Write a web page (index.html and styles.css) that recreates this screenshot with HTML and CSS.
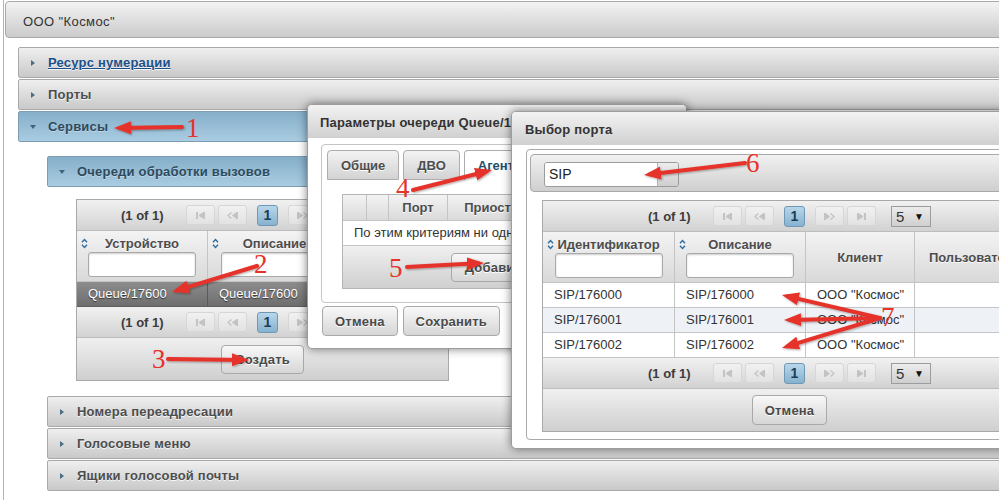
FILE: index.html
```html
<!DOCTYPE html>
<html lang="ru">
<head>
  <meta charset="UTF-8">
  <meta name="viewport" content="width=device-width, initial-scale=1.0">
  <title>Очереди обработки вызовов</title>
  <link rel="stylesheet" href="styles.css">
</head>
<body>
<div class="page">

  <div class="panel">
    <div class="panel-title">ООО "Космос"</div>

    <div class="acc">
      <div class="acc-head"><span class="ico-r"></span><a class="acc-link" href="#">Ресурс нумерации</a></div>
      <div class="acc-head"><span class="ico-r"></span>Порты</div>
      <div class="acc-head active"><span class="ico-d"></span>Сервисы</div>
      <div class="acc-body">
        <div class="acc-head active"><span class="ico-d"></span>Очереди обработки вызовов</div>
        <div class="acc-body queue-body">
          <div class="dt dt-queues">
            <div class="pager">
              <span class="pg-info">(1 of 1)</span>
              <span class="pg"><svg width="9" height="7"><path d="M0 0h1.6v7H0z M8.5 0v7L3 3.5z"/></svg></span>
              <span class="pg"><svg width="11" height="7"><path d="M4.5 0.5L1 3.5L4.5 6.5" fill="none" stroke-width="1.3"/><path d="M10.5 0v7L5.5 3.5z"/></svg></span>
              <span class="pg-cur">1</span>
              <span class="pg"><svg width="11" height="7"><path d="M0.5 0v7L5.5 3.5z"/><path d="M6.5 0.5L10 3.5L6.5 6.5" fill="none" stroke-width="1.3"/></svg></span>
              <span class="pg"><svg width="9" height="7"><path d="M0.5 0v7L6 3.5z M7.4 0H9v7H7.4z"/></svg></span>
              <span class="pg-rows">5<i>▼</i></span>
            </div>
            <div class="dt-row dt-head">
              <div class="th"><svg class="sort" width="7" height="11"><path d="M1 4.2L3.5 1.5L6 4.2 M1 6.8L3.5 9.5L6 6.8"/></svg><span class="th-label">Устройство</span><input class="filter" type="text"></div>
              <div class="th"><svg class="sort" width="7" height="11"><path d="M1 4.2L3.5 1.5L6 4.2 M1 6.8L3.5 9.5L6 6.8"/></svg><span class="th-label">Описание</span><input class="filter" type="text"></div>
              <div class="th"></div>
            </div>
            <div class="dt-row selected">
              <div class="td">Queue/17600</div>
              <div class="td">Queue/17600</div>
              <div class="td"></div>
            </div>
            <div class="pager">
              <span class="pg-info">(1 of 1)</span>
              <span class="pg"><svg width="9" height="7"><path d="M0 0h1.6v7H0z M8.5 0v7L3 3.5z"/></svg></span>
              <span class="pg"><svg width="11" height="7"><path d="M4.5 0.5L1 3.5L4.5 6.5" fill="none" stroke-width="1.3"/><path d="M10.5 0v7L5.5 3.5z"/></svg></span>
              <span class="pg-cur">1</span>
              <span class="pg"><svg width="11" height="7"><path d="M0.5 0v7L5.5 3.5z"/><path d="M6.5 0.5L10 3.5L6.5 6.5" fill="none" stroke-width="1.3"/></svg></span>
              <span class="pg"><svg width="9" height="7"><path d="M0.5 0v7L6 3.5z M7.4 0H9v7H7.4z"/></svg></span>
              <span class="pg-rows">5<i>▼</i></span>
            </div>
            <div class="dt-foot"><button class="btn" type="button">Создать</button></div>
          </div>
        </div>
        <div class="acc-head"><span class="ico-r"></span>Номера переадресации</div>
        <div class="acc-head"><span class="ico-r"></span>Голосовые меню</div>
        <div class="acc-head"><span class="ico-r"></span>Ящики голосовой почты</div>
      </div>
    </div>
  </div>

  <!-- диалог параметров очереди -->
  <div class="dlg dlg-queue">
    <div class="dlg-title">Параметры очереди Queue/17600</div>
    <div class="tabview">
      <div class="tabs">
        <span class="tab">Общие</span>
        <span class="tab">ДВО</span>
        <span class="tab tab-active">Агенты</span>
      </div>
      <div class="tab-panel">
        <div class="mini">
          <div class="mini-head">
            <div class="mc"></div>
            <div class="mc"></div>
            <div class="mc">Порт</div>
            <div class="mc">Приостановлен</div>
            <div class="mc"></div>
          </div>
          <div class="mini-empty">По этим критериям ни одной записи не найдено</div>
          <div class="dt-foot"><button class="btn" type="button">Добавить</button></div>
        </div>
      </div>
    </div>
    <div class="dlg-buttons">
      <button class="btn btn-big" type="button">Отмена</button>
      <button class="btn btn-big" type="button">Сохранить</button>
    </div>
  </div>

  <!-- диалог выбора порта -->
  <div class="dlg dlg-port">
    <div class="dlg-title">Выбор порта</div>
    <div class="port-panel">
      <div class="toolbar">
        <div class="select">
          <span class="select-value">SIP</span>
          <span class="select-trigger"></span>
        </div>
      </div>
      <div class="dt dt-ports">
        <div class="pager">
          <span class="pg-info">(1 of 1)</span>
          <span class="pg"><svg width="9" height="7"><path d="M0 0h1.6v7H0z M8.5 0v7L3 3.5z"/></svg></span>
          <span class="pg"><svg width="11" height="7"><path d="M4.5 0.5L1 3.5L4.5 6.5" fill="none" stroke-width="1.3"/><path d="M10.5 0v7L5.5 3.5z"/></svg></span>
          <span class="pg-cur">1</span>
          <span class="pg"><svg width="11" height="7"><path d="M0.5 0v7L5.5 3.5z"/><path d="M6.5 0.5L10 3.5L6.5 6.5" fill="none" stroke-width="1.3"/></svg></span>
          <span class="pg"><svg width="9" height="7"><path d="M0.5 0v7L6 3.5z M7.4 0H9v7H7.4z"/></svg></span>
          <span class="pg-rows">5<i>▼</i></span>
        </div>
        <div class="dt-row dt-head">
          <div class="th"><svg class="sort" width="7" height="11"><path d="M1 4.2L3.5 1.5L6 4.2 M1 6.8L3.5 9.5L6 6.8"/></svg><span class="th-label">Идентификатор</span><input class="filter" type="text"></div>
          <div class="th"><svg class="sort" width="7" height="11"><path d="M1 4.2L3.5 1.5L6 4.2 M1 6.8L3.5 9.5L6 6.8"/></svg><span class="th-label">Описание</span><input class="filter" type="text"></div>
          <div class="th th-mid">Клиент</div>
          <div class="th th-mid">Пользователь</div>
        </div>
        <div class="dt-row">
          <div class="td">SIP/176000</div>
          <div class="td">SIP/176000</div>
          <div class="td">ООО "Космос"</div>
          <div class="td"></div>
        </div>
        <div class="dt-row odd">
          <div class="td">SIP/176001</div>
          <div class="td">SIP/176001</div>
          <div class="td">ООО "Космос"</div>
          <div class="td"></div>
        </div>
        <div class="dt-row">
          <div class="td">SIP/176002</div>
          <div class="td">SIP/176002</div>
          <div class="td">ООО "Космос"</div>
          <div class="td"></div>
        </div>
        <div class="pager">
          <span class="pg-info">(1 of 1)</span>
          <span class="pg"><svg width="9" height="7"><path d="M0 0h1.6v7H0z M8.5 0v7L3 3.5z"/></svg></span>
          <span class="pg"><svg width="11" height="7"><path d="M4.5 0.5L1 3.5L4.5 6.5" fill="none" stroke-width="1.3"/><path d="M10.5 0v7L5.5 3.5z"/></svg></span>
          <span class="pg-cur">1</span>
          <span class="pg"><svg width="11" height="7"><path d="M0.5 0v7L5.5 3.5z"/><path d="M6.5 0.5L10 3.5L6.5 6.5" fill="none" stroke-width="1.3"/></svg></span>
          <span class="pg"><svg width="9" height="7"><path d="M0.5 0v7L6 3.5z M7.4 0H9v7H7.4z"/></svg></span>
          <span class="pg-rows">5<i>▼</i></span>
        </div>
        <div class="dt-foot"><button class="btn btn-big" type="button">Отмена</button></div>
      </div>
    </div>
  </div>

  <!-- пометки поверх скриншота -->
  <svg class="marks" width="999" height="500">
    <defs>
      <marker id="head" markerWidth="18" markerHeight="14" refX="11" refY="6.5" orient="auto" markerUnits="userSpaceOnUse">
        <path d="M0 0L17 6.5L0 13z"/>
      </marker>
      <filter id="shade"><feDropShadow dx="1" dy="1" stdDeviation="0.8" flood-opacity="0.35"/></filter>
    </defs>
    <g class="arrows" filter="url(#shade)">
      <line x1="182" y1="127" x2="120" y2="128"/>
      <line x1="257" y1="266" x2="177.7" y2="290.2"/>
      <line x1="168" y1="359" x2="243" y2="360"/>
      <line x1="413" y1="190" x2="486.2" y2="171.5"/>
      <line x1="407" y1="267" x2="478" y2="263.3"/>
      <line x1="745" y1="163" x2="650" y2="174.3"/>
      <line x1="880" y1="318" x2="787.8" y2="296.4"/>
      <line x1="880" y1="318" x2="790" y2="319.9"/>
      <line x1="880" y1="318" x2="787.7" y2="346.2"/>
    </g>
    <g class="nums">
      <text x="186" y="137">1</text>
      <text x="254" y="273">2</text>
      <text x="152" y="368">3</text>
      <text x="396" y="197">4</text>
      <text x="389" y="277">5</text>
      <text x="746" y="172">6</text>
      <text x="881" y="326">7</text>
    </g>
  </svg>

</div>
</body>
</html>
```

FILE: styles.css
```css
* {
  box-sizing: border-box;
}

body {
  margin: 0;
  font-family: "Liberation Sans", Arial, sans-serif;
  font-size: 13px;
  color: #333;
  background: #fff;
}

.page {
  position: relative;
  width: 999px;
  height: 500px;
  overflow: hidden;
}

/* основная панель */
.panel {
  margin-left: 3px;
  padding-top: 1px;
  width: 1200px;
  height: 500px;
  border-left: 1px solid #b4b4b4;
}

.panel-title {
  margin-left: 1px;
  height: 37px;
  padding-left: 17px;
  line-height: 39px;
  border: 1px solid #a9a9a9;
  border-radius: 4px;
  background: linear-gradient(#f3f3f3, #cbcbcb);
  letter-spacing: 0.4px;
  color: #333;
}

.acc {
  margin: 9px 0 0 14px;
}

.acc-head {
  display: flex;
  align-items: center;
  height: 31px;
  margin-bottom: 1px;
  padding-left: 11px;
  border: 1px solid #a9a9a9;
  border-radius: 2px;
  background: linear-gradient(#efefef, #c9c9c9);
  font-weight: bold;
  letter-spacing: 0.2px;
  color: #4d4d4d;
  text-shadow: 0 1px 0 rgba(255, 255, 255, 0.8);
}

.acc-head.active {
  border-color: #7d9db3;
  background: linear-gradient(#86afca, #a9cce1);
  color: #2c4a5e;
  text-shadow: 0 1px 0 rgba(255, 255, 255, 0.35);
}

.acc-link {
  color: #1b4f8a;
}

.ico-r,
.ico-d {
  width: 6px;
  margin-right: 12px;
  display: flex;
  justify-content: center;
}

.ico-r::before {
  content: "";
  border-left: 4px solid #4a6e87;
  border-top: 3.5px solid transparent;
  border-bottom: 3.5px solid transparent;
}

.ico-d::before {
  content: "";
  border-top: 4px solid #3e6580;
  border-left: 3.5px solid transparent;
  border-right: 3.5px solid transparent;
}

.acc-body {
  padding: 13px 0 0 29px;
}

.acc-body.queue-body {
  padding: 11px 0 15px 29px;
}

/* таблицы */
.dt {
  border: 1px solid #a9a9a9;
  background: #fff;
}

.dt-queues {
  width: 373px;
}

.dt-ports {
  width: 495px;
  margin: 8px 0 0 12px;
}

.pager {
  display: flex;
  align-items: center;
  justify-content: center;
  height: 31px;
  border-bottom: 1px solid #bdbdbd;
  background: linear-gradient(#f1f1f1, #d2d2d2);
}

.pg-info {
  width: 40px;
  margin-right: 25px;
  font-weight: bold;
  color: #3c3c3c;
  white-space: nowrap;
}

.pg {
  display: flex;
  align-items: center;
  justify-content: center;
  width: 29px;
  height: 20px;
  margin-right: 3px;
  border: 1px solid #d6d6d6;
  border-radius: 3px;
  background: linear-gradient(#f1f1f1, #e2e2e2);
}

.pg:nth-child(3) {
  margin-right: 10px;
}

.pg:nth-child(6) {
  margin-right: 15px;
}

.pg svg {
  fill: #c3c3c3;
  stroke: #c3c3c3;
}

.pg-cur {
  width: 21px;
  height: 21px;
  margin-right: 10px;
  line-height: 19px;
  text-align: center;
  border: 1px solid #6e98b6;
  border-radius: 3px;
  background: linear-gradient(#b9d6e9, #86b2cf);
  font-weight: bold;
  font-size: 14px;
  color: #1e3d57;
}

.pg-rows {
  display: flex;
  align-items: center;
  justify-content: space-between;
  width: 40px;
  height: 21px;
  padding: 0 6px 0 4px;
  border: 1px solid #9c9c9c;
  background: linear-gradient(#ececec, #cfcfcf);
  font-size: 15px;
  color: #333;
}

.pg-rows i {
  font-style: normal;
  font-size: 10px;
  color: #111;
}

.dt-row {
  display: grid;
  height: 25px;
  border-bottom: 1px solid #c4c4c4;
}

.dt-queues .dt-row {
  grid-template-columns: 131px 134px 1fr;
}

.dt-ports .dt-row {
  grid-template-columns: 132px 131px 109px 1fr;
}

.dt-head {
  height: 51px;
  background: linear-gradient(#f3f3f3, #d9d9d9);
}

.th {
  position: relative;
  padding-top: 5px;
  border-right: 1px solid #c4c4c4;
  text-align: center;
  font-weight: bold;
  color: #4d4d4d;
  text-shadow: 0 1px 0 rgba(255, 255, 255, 0.8);
}

.th-mid {
  display: flex;
  align-items: center;
  justify-content: center;
  padding-top: 0;
}

.th-label {
  display: block;
  height: 16px;
  line-height: 16px;
  white-space: nowrap;
}

.sort {
  position: absolute;
  left: 4px;
  top: 7px;
  fill: none;
  stroke: #2f6c9e;
  stroke-width: 1.4;
}

.filter {
  display: block;
  width: 108px;
  height: 25px;
  margin: 0 auto;
  border: 1px solid #a9a9a9;
  border-radius: 3px;
  box-shadow: inset 0 1px 2px rgba(0, 0, 0, 0.2);
  background: #fff;
}

.td {
  padding-left: 11px;
  line-height: 24px;
  border-right: 1px solid #c4c4c4;
  white-space: nowrap;
  overflow: hidden;
  color: #333;
}

.dt-row.odd {
  background: #eef2f7;
}

.dt-row.selected {
  background: linear-gradient(#8c8c8c, #6e6e6e);
  border-bottom-color: #5e5e5e;
}

.dt-row.selected .td {
  color: #fff;
  border-right-color: #5a5a5a;
  text-shadow: 0 1px 1px rgba(0, 0, 0, 0.6);
}

.dt-foot {
  display: flex;
  align-items: center;
  justify-content: center;
  height: 42px;
  background: linear-gradient(#f0f0f0, #cfcfcf);
}

.btn {
  height: 29px;
  padding: 0 13px;
  border: 1px solid #a9a9a9;
  border-radius: 4px;
  background: linear-gradient(#f8f8f8, #d6d6d6);
  font-family: "Liberation Sans", Arial, sans-serif;
  font-size: 13px;
  font-weight: bold;
  letter-spacing: 0.2px;
  color: #4a4a4a;
  text-shadow: 0 1px 0 #fff;
}

.btn-big {
  height: 30px;
  padding: 0 12px;
}

/* диалоги */
.dlg {
  position: absolute;
  background: #fff;
  border: 1px solid #9d9d9d;
  border-radius: 5px;
  box-shadow: 0 0 10px rgba(0, 0, 0, 0.5);
}

.dlg-queue {
  left: 307px;
  top: 104px;
  width: 380px;
  height: 245px;
}

.dlg-port {
  left: 511px;
  top: 111px;
  width: 600px;
  height: 338px;
}

.dlg-title {
  height: 33px;
  padding-left: 12px;
  line-height: 35px;
  border-radius: 4px 4px 0 0;
  background: linear-gradient(#f3f3f3, #d0d0d0);
  font-weight: bold;
  letter-spacing: 0.2px;
  color: #333;
  white-space: nowrap;
  overflow: hidden;
}

.dlg-port .dlg-title {
  padding-left: 13px;
}

.tabview {
  height: 159px;
  margin: 6px 13px 0 13px;
  padding: 5px;
  border: 1px solid #c5c5c5;
  border-radius: 4px;
}

.tabs {
  display: flex;
  gap: 4px;
}

.tab {
  height: 30px;
  padding: 0 13px;
  line-height: 29px;
  border: 1px solid #adadad;
  border-radius: 4px 4px 0 0;
  background: linear-gradient(#f3f3f3, #d3d3d3);
  font-weight: bold;
  color: #4d4d4d;
  text-shadow: 0 1px 0 #fff;
}

.tab-active {
  border-bottom: none;
  background: #fff;
  color: #224e6d;
}

.tab-panel {
  padding: 14px 0 0 15px;
}

.mini {
  width: 310px;
  border: 1px solid #b5b5b5;
}

.mini-head {
  display: grid;
  grid-template-columns: 24px 22px 59px 134px 1fr;
  height: 26px;
  border-bottom: 1px solid #c4c4c4;
  background: linear-gradient(#f3f3f3, #dadada);
}

.mc {
  line-height: 25px;
  text-align: center;
  border-right: 1px solid #c4c4c4;
  font-weight: bold;
  color: #4d4d4d;
  text-shadow: 0 1px 0 #fff;
}

.mini-empty {
  height: 25px;
  padding-left: 11px;
  line-height: 24px;
  border-bottom: 1px solid #c4c4c4;
  white-space: nowrap;
  color: #333;
}

.dlg-buttons {
  display: flex;
  gap: 5px;
  margin: 3px 0 0 14px;
}

.port-panel {
  height: 291px;
  margin: 4px 0 0 14px;
  padding: 4px 3px;
  border: 1px solid #a9a9a9;
  border-radius: 4px;
}

.toolbar {
  height: 38px;
  padding: 7px 0 0 13px;
  border: 1px solid #a9a9a9;
  border-radius: 4px;
  background: linear-gradient(#f1f1f1, #cfcfcf);
}

.select {
  display: flex;
  width: 135px;
  height: 25px;
  border: 1px solid #9c9c9c;
  border-radius: 3px;
  overflow: hidden;
}

.select-value {
  flex: 1;
  padding-left: 4px;
  line-height: 23px;
  background: #fff;
  font-size: 14px;
  color: #222;
}

.select-trigger {
  width: 21px;
  border-left: 1px solid #b5b5b5;
  background: linear-gradient(#ececec, #cfcfcf);
}

/* стрелки и цифры */
.marks {
  position: absolute;
  left: 0;
  top: 0;
  pointer-events: none;
}

.marks marker path {
  fill: #e5332a;
}

.arrows line {
  stroke: #e5332a;
  stroke-width: 4;
  stroke-linecap: round;
  marker-end: url(#head);
}

.nums text {
  font-family: "Liberation Serif", serif;
  font-size: 27px;
  fill: #e5332a;
}
```
